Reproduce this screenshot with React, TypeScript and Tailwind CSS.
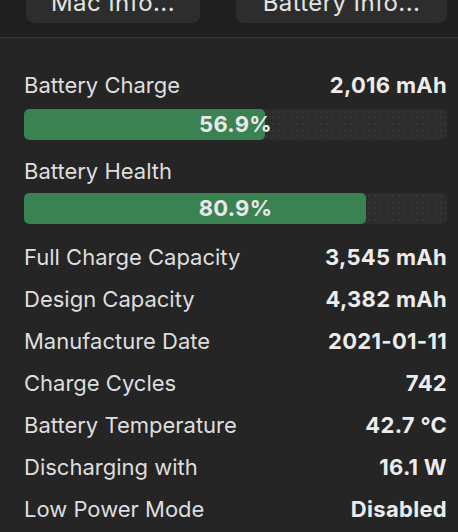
import React from 'react';

const rows: [string, string][] = [
  ['Full Charge Capacity', '3,545 mAh'],
  ['Design Capacity', '4,382 mAh'],
  ['Manufacture Date', '2021-01-11'],
  ['Charge Cycles', '742'],
  ['Battery Temperature', '42.7 °C'],
  ['Discharging with', '16.1 W'],
  ['Low Power Mode', 'Disabled'],
];

function Bar({ value }: { value: number }) {
  return (
    <div className="relative h-[31px] rounded-[5px] bg-[#2d2d2d] bg-[radial-gradient(#363636_1px,transparent_1px)] bg-[length:6px_6px] overflow-hidden">
      <div className="absolute inset-y-0 left-0 rounded-[5px] bg-[#3a8252]" style={{ width: `${value}%` }} />
      <div className="relative flex h-full items-center justify-center text-[22px] font-bold tracking-[0.3px] text-[#e8e8e8]">
        {value.toFixed(1)}%
      </div>
    </div>
  );
}

function Row({ label, value }: { label: string; value: string }) {
  return (
    <div className="flex h-[42px] items-center justify-between">
      <span className="text-[#dedede]">{label}</span>
      <span className="font-bold tracking-[0.3px] text-[#ececec]">{value}</span>
    </div>
  );
}

export default function App() {
  return (
    <div className="h-[532px] w-[458px] overflow-hidden bg-[#252525] text-[22px] font-['Inter',sans-serif]">
      {/* top buttons, cut off by the window */}
      <div className="flex h-[38px] justify-between border-b border-[#3a3a3a] bg-[#1f1f1f] pl-[26px] pr-[11px]">
        <button className="-mt-[17px] h-[40px] w-[174px] rounded-[8px] bg-[#2d2d2d] text-[24px] tracking-[0.4px] text-[#e4e4e4]">Mac Info...</button>
        <button className="-mt-[17px] h-[40px] w-[211px] rounded-[8px] bg-[#2d2d2d] text-[24px] tracking-[0.4px] text-[#e4e4e4]">Battery Info...</button>
      </div>

      <div className="pl-[24px] pr-[11px] pt-[26px]">
        <Row label="Battery Charge" value="2,016 mAh" />
        <div className="mt-[3px]">
          <Bar value={56.9} />
        </div>
        <div className="mt-[10px]">
          <Row label="Battery Health" value="" />
        </div>
        <div className="mt-[1px]">
          <Bar value={80.9} />
        </div>
        <div className="mt-[12px]">
          {rows.map(([l, v]) => (
            <Row key={l} label={l} value={v} />
          ))}
        </div>
      </div>
    </div>
  );
}
